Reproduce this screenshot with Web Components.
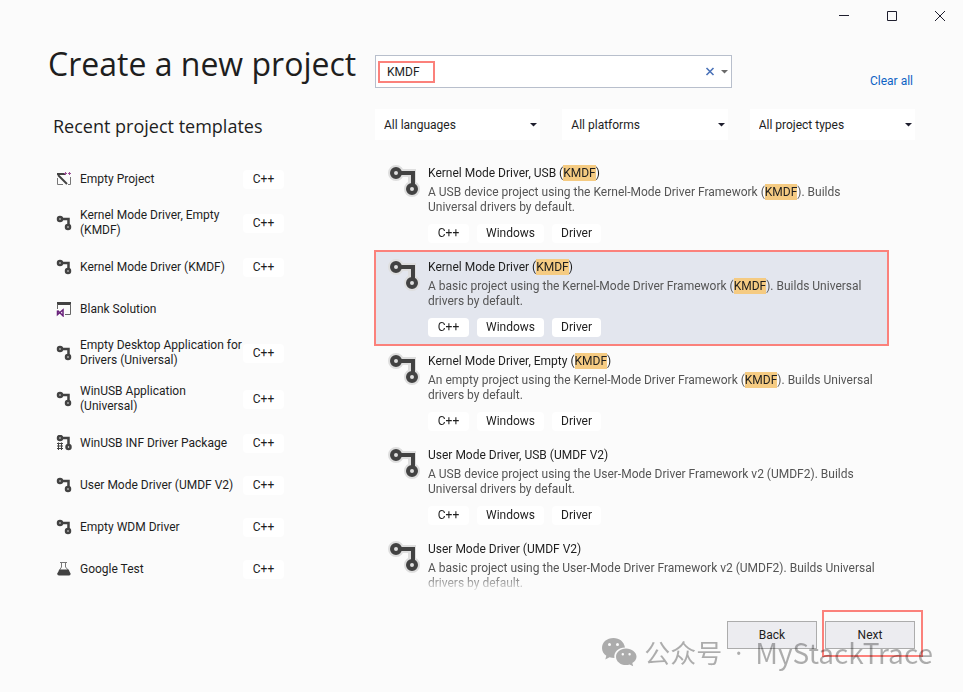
<!DOCTYPE html>
<html lang="en">
<head>
<meta charset="utf-8">
<meta name="viewport" content="width=device-width, initial-scale=1">
<title>Create a new project</title>
<style>
  body {
    margin: 0;
    background: #fbfbfb;
    color: #1e1e1e;
    font: 12px/15px Roboto, "Noto Sans", sans-serif;
  }
</style>
</head>
<body>
<project-dialog>
  <window-buttons slot="titlebar"></window-buttons>
  <recent-templates slot="recent"></recent-templates>
  <template-search slot="search" value="KMDF"></template-search>
  <filter-select slot="filters" label="Language">All languages</filter-select>
  <filter-select slot="filters" label="Platform">All platforms</filter-select>
  <filter-select slot="filters" label="Project type">All project types</filter-select>
  <template-results slot="results" query="KMDF"></template-results>
  <dialog-actions slot="actions"></dialog-actions>
  <account-watermark slot="watermark" account="公众号" name="MyStackTrace"></account-watermark>
</project-dialog>

<script>
// Drawings shared by the recent list and the results
const ICONS = {
  driver: `
    <svg viewBox="0 0 32 32" fill="none" aria-hidden="true">
      <g class="halo" stroke="#dedede" stroke-width="8">
        <path d="M12 8H24V20"/>
        <circle cx="8" cy="8" r="4"/>
        <circle cx="24" cy="24" r="4"/>
      </g>
      <g class="line" stroke="#424242" stroke-width="4">
        <path d="M12 8H25V20"/>
        <circle cx="8" cy="8" r="4"/>
        <circle cx="24" cy="24" r="4"/>
      </g>
    </svg>`,
  inf: `
    <svg viewBox="0 0 32 32" fill="none" stroke="#424242" aria-hidden="true">
      <g class="line" stroke-width="4">
        <path d="M12 6H25V20"/>
        <circle cx="8" cy="6" r="4"/>
        <circle cx="25" cy="24" r="4"/>
      </g>
      <path d="M2 17H14M2 22H14M2 27H14M5 15V30M11 15V30" stroke-width="2"/>
    </svg>`,
  empty: `
    <svg viewBox="0 0 16 16" fill="none" aria-hidden="true">
      <path d="M1 3H9" stroke="#424242" stroke-width="2"/>
      <path d="M1.500 7V13.500H7M14.500 6V13.500H12" stroke="#777"/>
      <path d="M2 4L11 13" stroke="#424242" stroke-width="2"/>
      <path d="M8 2.500H11M9.500 1V4M12 2.500H15M13.500 1V4" stroke="#9b4f96"/>
    </svg>`,
  solution: `
    <svg viewBox="0 0 16 16" fill="none" aria-hidden="true">
      <path d="M1 2.500H15" stroke="#424242" stroke-width="3"/>
      <path d="M1.500 3V8M14.500 3V13.500H9" stroke="#666"/>
      <path d="M1.500 9.500V13.500L7 8.800V14.800L1.500 9.500" stroke="#68217a" stroke-width="1.500"/>
    </svg>`,
  flask: `
    <svg viewBox="0 0 16 16" fill="none" aria-hidden="true">
      <path d="M4 1.500H11M5.500 2V6L3 10M9.500 2V6L13 10" stroke="#777"/>
      <path d="M3.500 8.500H12.500L14.500 12.500Q15 14.500 13 14.500H3Q1 14.500 1.300 12.500Z" fill="#424242"/>
    </svg>`
};

const RECENT = [
  { icon: "empty", name: "Empty Project", tag: "C++" },
  { icon: "driver", name: "Kernel Mode Driver, Empty (KMDF)", tag: "C++" },
  { icon: "driver", name: "Kernel Mode Driver (KMDF)", tag: "C++" },
  { icon: "solution", name: "Blank Solution" },
  { icon: "driver", name: "Empty Desktop Application for Drivers (Universal)", tag: "C++" },
  { icon: "driver", name: "WinUSB Application (Universal)", tag: "C++" },
  { icon: "inf", name: "WinUSB INF Driver Package", tag: "C++" },
  { icon: "driver", name: "User Mode Driver (UMDF V2)", tag: "C++" },
  { icon: "driver", name: "Empty WDM Driver", tag: "C++" },
  { icon: "flask", name: "Google Test", tag: "C++" }
];

const TAGS = ["C++", "Windows", "Driver"];

const RESULTS = [
  {
    name: "Kernel Mode Driver, USB (KMDF)",
    text: "A USB device project using the Kernel-Mode Driver Framework (KMDF). Builds Universal drivers by default.",
    tags: TAGS
  },
  {
    name: "Kernel Mode Driver (KMDF)",
    text: "A basic project using the Kernel-Mode Driver Framework (KMDF). Builds Universal drivers by default.",
    tags: TAGS,
    selected: true
  },
  {
    name: "Kernel Mode Driver, Empty (KMDF)",
    text: "An empty project using the Kernel-Mode Driver Framework (KMDF). Builds Universal drivers by default.",
    tags: TAGS
  },
  {
    name: "User Mode Driver, USB (UMDF V2)",
    text: "A USB device project using the User-Mode Driver Framework v2 (UMDF2). Builds Universal drivers by default.",
    tags: TAGS
  },
  {
    name: "User Mode Driver (UMDF V2)",
    text: "A basic project using the User-Mode Driver Framework v2 (UMDF2). Builds Universal drivers by default.",
    tags: []
  }
];

// The frame: title bar, two columns and the buttons at the bottom
class ProjectDialog extends HTMLElement {
  connectedCallback() {
    const shadow = this.attachShadow({ mode: "open" });
    shadow.innerHTML = `
      <style>
        :host {
          display: flex;
          flex-direction: column;
          position: relative;
          height: 100vh;
          overflow: hidden;
        }

        .columns {
          display: grid;
          grid-template-columns: 327px minmax(0, 1fr);
          flex: 1;
          min-height: 0;
          padding: 0 48px;
        }

        aside {
          padding-top: 12px;
        }

        h1,
        h2 {
          font-family: "Open Sans", "Noto Sans", sans-serif;
          font-weight: 400;
        }

        h1 {
          margin: 0;
          font-size: 32px;
          line-height: 40px;
          white-space: nowrap;
        }

        h2 {
          margin: 30px 0 20px 5px;
          font-size: 18px;
          line-height: 24px;
        }

        main {
          display: flex;
          flex-direction: column;
          min-height: 0;
          padding-top: 23px;
        }

        .filters {
          display: grid;
          grid-template-columns: repeat(3, 1fr);
          gap: 22px;
          margin: 21px 0 17px;
        }
      </style>
      <slot name="titlebar"></slot>
      <div class="columns">
        <aside>
          <h1>Create a new project</h1>
          <h2>Recent project templates</h2>
          <slot name="recent"></slot>
        </aside>
        <main>
          <slot name="search"></slot>
          <div class="filters"><slot name="filters"></slot></div>
          <slot name="results"></slot>
        </main>
      </div>
      <slot name="actions"></slot>
      <slot name="watermark"></slot>
    `;
  }
}

class WindowButtons extends HTMLElement {
  connectedCallback() {
    const shadow = this.attachShadow({ mode: "open" });
    shadow.innerHTML = `
      <style>
        :host {
          display: flex;
          justify-content: flex-end;
          height: 32px;
        }

        button {
          display: grid;
          place-items: center;
          width: 48px;
          padding: 0;
          border: 0;
          background: none;
        }

        svg {
          width: 12px;
          height: 12px;
          fill: none;
          stroke: #1e1e2e;
        }
      </style>
      <button aria-label="Minimize"><svg viewBox="0 0 12 12"><path d="M2 5.500H12"/></svg></button>
      <button aria-label="Maximize"><svg viewBox="0 0 12 12"><path d="M2.500 1.500H11.500V10.500H2.500Z"/></svg></button>
      <button aria-label="Close"><svg viewBox="0 0 12 12"><path d="M2 1L12 11M12 1L2 11"/></svg></button>
    `;
  }
}

// White rounded label, text comes from the slot
class TemplateTag extends HTMLElement {
  connectedCallback() {
    const shadow = this.attachShadow({ mode: "open" });
    shadow.innerHTML = `
      <style>
        :host {
          display: block;
          box-sizing: border-box;
          min-width: 41px;
          padding: 2px 9px;
          border-radius: 4px;
          background: #fff;
          color: #1e1e1e;
          line-height: 15px;
          text-align: center;
          white-space: nowrap;
        }
      </style>
      <slot></slot>
    `;
  }
}

class RecentTemplates extends HTMLElement {
  connectedCallback() {
    const shadow = this.attachShadow({ mode: "open" });
    shadow.innerHTML = `
      <style>
        :host {
          display: block;
        }

        ul {
          list-style: none;
          margin: 0;
          padding: 0 0 0 8px;
        }

        li {
          display: grid;
          grid-template-columns: 24px 163px auto;
          align-items: center;
          justify-content: start;
          min-height: 26px;
          padding: 8px 0;
        }

        svg {
          display: block;
          width: 16px;
          height: 16px;
        }

        .halo {
          display: none;
        }

        .line {
          stroke-width: 5px;
        }
      </style>
      <ul></ul>
    `;

    const ul = shadow.querySelector("ul");
    RECENT.forEach(({ icon, name, tag }) => {
      const li = document.createElement("li");
      li.innerHTML = `${ICONS[icon]}<span>${name}</span>`;
      if (tag) {
        li.innerHTML += `<template-tag>${tag}</template-tag>`;
      }
      ul.appendChild(li);
    });
  }
}

class TemplateSearch extends HTMLElement {
  connectedCallback() {
    const shadow = this.attachShadow({ mode: "open" });
    shadow.innerHTML = `
      <style>
        :host {
          display: flex;
          justify-content: space-between;
          align-items: flex-end;
        }

        .box {
          display: flex;
          align-items: center;
          flex: 0 1 357px;
          box-sizing: border-box;
          height: 33px;
          padding-left: 2px;
          border: 1px solid #b8bfcc;
          background: #fff;
        }

        .field {
          flex: 1;
        }

        input {
          box-sizing: border-box;
          width: 57px;
          height: 22px;
          padding: 0 7px;
          border: 2px solid #fb817b;
          outline: 0;
          background: none;
          color: inherit;
          font: inherit;
        }

        button {
          display: grid;
          place-items: center;
          width: 14px;
          height: 29px;
          padding: 0;
          border: 0;
          background: none;
        }

        svg {
          width: 10px;
          height: 10px;
        }

        a {
          padding-right: 2px;
          color: #0e63c4;
          line-height: 13px;
          text-decoration: none;
        }
      </style>
      <div class="box">
        <div class="field"><input type="text" aria-label="Search for templates"></div>
        <button aria-label="Clear search">
          <svg viewBox="0 0 10 10"><path d="M1.500 1L8.500 8M8.500 1L1.500 8" stroke="#4a72b8" stroke-width="1.600"/></svg>
        </button>
        <button aria-label="Search history">
          <svg viewBox="0 0 10 10"><path d="M2 3H9L5.500 6.500Z" fill="#6a6a6a"/></svg>
        </button>
      </div>
      <a href="#">Clear all</a>
    `;
    shadow.querySelector("input").value = this.getAttribute("value");
  }
}

class FilterSelect extends HTMLElement {
  connectedCallback() {
    const shadow = this.attachShadow({ mode: "open" });
    shadow.innerHTML = `
      <style>
        :host {
          display: grid;
          grid-template-columns: minmax(0, 1fr) 12px;
          align-items: center;
          height: 31px;
          background: #fff;
        }

        select {
          grid-area: 1 / 1 / 2 / 3;
          height: 31px;
          padding: 2px 9px 0;
          border: 0;
          appearance: none;
          background: none;
          color: inherit;
          font: inherit;
        }

        svg {
          grid-area: 1 / 2;
          width: 10px;
          height: 10px;
          pointer-events: none;
        }
      </style>
      <select><option></option></select>
      <svg viewBox="0 0 10 10"><path d="M2 3H9L5.500 6.500Z" fill="#1e1e2e"/></svg>
    `;
    shadow.querySelector("select").setAttribute("aria-label", this.getAttribute("label"));
    shadow.querySelector("option").textContent = this.textContent;
  }
}

class TemplateResults extends HTMLElement {
  connectedCallback() {
    const query = this.getAttribute("query");
    const shadow = this.attachShadow({ mode: "open" });
    shadow.innerHTML = `
      <style>
        /* The extra space on the left keeps the outline from being clipped */
        :host {
          display: block;
          flex: 1;
          min-height: 0;
          margin-left: -2px;
          padding-left: 2px;
          overflow: hidden;
          -webkit-mask-image: linear-gradient(#000 calc(100% - 20px), transparent);
          mask-image: linear-gradient(#000 calc(100% - 20px), transparent);
        }

        ul {
          list-style: none;
          margin: 0 27px 0 0;
          padding: 0;
        }

        li {
          display: grid;
          grid-template-columns: 32px minmax(0, 1fr);
          column-gap: 8px;
          padding: 8px 8px 8px 13px;
        }

        li.selected {
          background: #e3e6ee;
          outline: 2px solid #fb817b;
          outline-offset: -1px;
        }

        svg {
          width: 32px;
          height: 32px;
        }

        h3 {
          margin: 0 0 4px;
          font-size: 12px;
          line-height: 16px;
          font-weight: 400;
        }

        p {
          margin: 0 0 9px;
          color: #555;
        }

        mark {
          padding: 1px 0;
          background: #f5cb82;
          color: #1e1e1e;
        }

        .tags {
          display: flex;
          gap: 8px;
        }
      </style>
      <ul></ul>
    `;

    const ul = shadow.querySelector("ul");
    const highlight = text => text.replaceAll(query, `<mark>${query}</mark>`);
    RESULTS.forEach(({ name, text, tags, selected }) => {
      const li = document.createElement("li");
      li.classList.toggle("selected", Boolean(selected));
      li.innerHTML = `
        ${ICONS.driver}
        <div>
          <h3>${highlight(name)}</h3>
          <p>${highlight(text)}</p>
          <div class="tags">${tags.map(tag => `<template-tag>${tag}</template-tag>`).join("")}</div>
        </div>
      `;
      ul.appendChild(li);
    });
  }
}

class DialogActions extends HTMLElement {
  connectedCallback() {
    const shadow = this.attachShadow({ mode: "open" });
    shadow.innerHTML = `
      <style>
        :host {
          display: flex;
          justify-content: flex-end;
          gap: 5px;
          padding: 17px 40px 35px 48px;
        }

        button {
          display: block;
          width: 90px;
          height: 28px;
          padding: 0;
          border: 1px solid #acacac;
          background: #ececf0;
          color: inherit;
          font: inherit;
        }

        .back {
          padding-top: 11px;
        }

        .next {
          padding: 9px 6px 6px 1px;
          border: 2px solid #fb817b;
        }
      </style>
      <div class="back"><button>Back</button></div>
      <div class="next"><button>Next</button></div>
    `;
  }
}

class AccountWatermark extends HTMLElement {
  connectedCallback() {
    const shadow = this.attachShadow({ mode: "open" });
    shadow.innerHTML = `
      <style>
        :host {
          display: flex;
          align-items: center;
          position: absolute;
          right: 30px;
          bottom: 22px;
          color: #000;
          font: 26px/36px "Noto Sans CJK SC", sans-serif;
          opacity: 0.31;
          pointer-events: none;
        }

        svg {
          width: 36px;
          height: 30px;
          margin-right: 7px;
        }

        .dot {
          margin: 0 13px;
          font-family: "Noto Sans", sans-serif;
        }

        .name {
          font-size: 28px;
        }
      </style>
      <svg viewBox="0 0 36 30" aria-hidden="true">
        <path fill-rule="evenodd" d="M12.500 1C5.800 1 1 5.300 1 11C1 14.200 2.600 16.900 5.300 18.800L4.300 22.500L8.600 20.300C10 20.800 11.500 21 13.400 21C12.600 15 17.500 10.500 24 10.500C23 4.800 18.500 1 12.500 1ZM8.500 6A1.500 1.500 0 1 1 8.500 9A1.500 1.500 0 1 1 8.500 6ZM16.500 6A1.500 1.500 0 1 1 16.500 9A1.500 1.500 0 1 1 16.500 6Z"/>
        <path fill-rule="evenodd" d="M25 11.500C19.300 11.500 15 15.200 15 19.700C15 24.300 19.300 28 25 28C26.300 28 27.500 27.800 28.600 27.400L32.200 29.200L31.300 26C33.900 24.500 35.500 22.300 35.500 19.700C35.500 15.200 30.800 11.500 25 11.500ZM21.800 16A1.200 1.200 0 1 1 21.800 18.400A1.200 1.200 0 1 1 21.800 16ZM28.600 16A1.200 1.200 0 1 1 28.600 18.400A1.200 1.200 0 1 1 28.600 16Z"/>
      </svg>
      <span class="account"></span>
      <span class="dot">·</span>
      <span class="name"></span>
    `;
    shadow.querySelector(".account").textContent = this.getAttribute("account");
    shadow.querySelector(".name").textContent = this.getAttribute("name");
  }
}

customElements.define("project-dialog", ProjectDialog);
customElements.define("window-buttons", WindowButtons);
customElements.define("template-tag", TemplateTag);
customElements.define("recent-templates", RecentTemplates);
customElements.define("template-search", TemplateSearch);
customElements.define("filter-select", FilterSelect);
customElements.define("template-results", TemplateResults);
customElements.define("dialog-actions", DialogActions);
customElements.define("account-watermark", AccountWatermark);
</script>
</body>
</html>
